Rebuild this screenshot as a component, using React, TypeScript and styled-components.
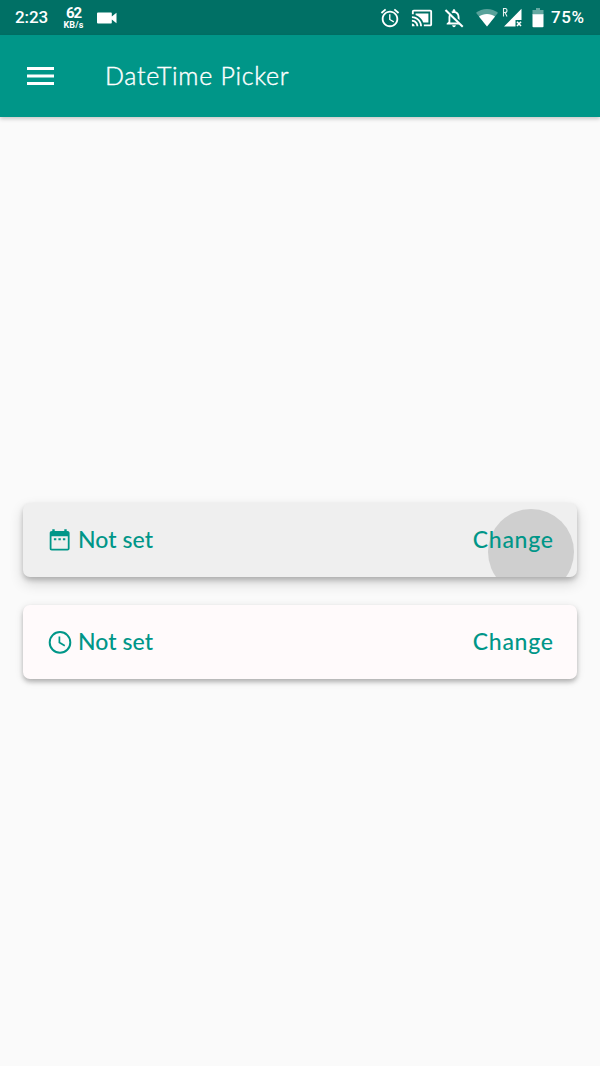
import React from "react";
import styled, { createGlobalStyle } from "styled-components";

const GlobalStyle = createGlobalStyle`
  * { box-sizing: border-box; }
  body { margin: 0; background: #fafafa; }
`;

const Screen = styled.div`
  display: flex;
  flex-direction: column;
  width: 600px;
  height: 1066px;
  overflow: hidden;
  background: #fafafa;
  font-family: Lato, "Open Sans", sans-serif;
`;

const StatusBar = styled.header`
  display: flex;
  align-items: center;
  height: 35px;
  flex: none;
  padding: 0 15px;
  background: #007065;
  color: #fff;
  font-family: Roboto, sans-serif;
  font-weight: 500;
`;

const Clock = styled.span`
  width: 48px;
  font-size: 17px;
  line-height: 35px;
  letter-spacing: -0.1px;
`;

const NetSpeed = styled.div`
  display: flex;
  flex-direction: column;
  align-items: center;
  width: 21px;
  margin-right: 13px;
  padding-top: 1px;
  font-weight: 700;
`;

const SpeedValue = styled.span`
  font-size: 15px;
  line-height: 13px;
  letter-spacing: -1px;
`;

const SpeedUnit = styled.span`
  font-size: 9px;
  line-height: 10px;
  letter-spacing: 0.2px;
  white-space: nowrap;
`;

const Spacer = styled.div`
  flex: 1;
`;

const Glyph = styled.svg<{ $w: number; $h?: number; $gap?: number }>`
  position: relative;
  display: block;
  flex: none;
  width: ${(p) => p.$w}px;
  height: ${(p) => p.$h ?? p.$w}px;
  margin-right: ${(p) => p.$gap ?? 0}px;
  fill: currentColor;
`;

const Battery = styled.span`
  width: 34px;
  font-size: 17px;
  line-height: 35px;
  letter-spacing: 0.6px;
  white-space: nowrap;
`;

const AppBar = styled.nav`
  display: flex;
  align-items: center;
  height: 82px;
  flex: none;
  padding-left: 27px;
  background: #009688;
  color: #fff;
  box-shadow: 0 2px 4px rgba(0, 0, 0, 0.2);
`;

const Title = styled.h1`
  margin: 0 0 3px 51px;
  font-size: 25px;
  line-height: 34px;
  font-weight: 300;
  letter-spacing: 0.7px;
  -webkit-text-stroke: 0.4px currentColor;
`;

const Content = styled.main`
  display: flex;
  flex: 1;
  flex-direction: column;
  justify-content: center;
  gap: 28px;
  padding: 0 23px 2px;
`;

const PickerButton = styled.button<{ $pressed?: boolean }>`
  position: relative;
  display: flex;
  align-items: center;
  height: 74px;
  padding: 0 24px 0 25px;
  border: 0;
  border-radius: 7px;
  overflow: hidden;
  background: ${(p) => (p.$pressed ? "#efefef" : "#fffafb")};
  color: #009688;
  font-family: inherit;
  font-size: 23px;
  font-weight: 500;
  box-shadow: ${(p) =>
    p.$pressed
      ? "0 3px 5px rgba(0,0,0,.2), 0 6px 14px rgba(0,0,0,.16)"
      : "0 3px 4px rgba(0,0,0,.22), 0 2px 8px rgba(0,0,0,.12)"};
`;

const Ripple = styled.span`
  position: absolute;
  left: 465px;
  top: 6px;
  width: 86px;
  height: 86px;
  border-radius: 50%;
  background: #cfcfcf;
`;

const Label = styled.span<{ $spacing: number }>`
  position: relative;
  padding-bottom: 2px;
  line-height: 30px;
  letter-spacing: ${(p) => p.$spacing}px;
  margin-right: ${(p) => -p.$spacing}px;
`;

const CalendarIcon = () => (
  <Glyph $w={24} $gap={6} viewBox="0 0 24 24">
    <path fillRule="evenodd" d="M19.5 3H18.7V1.2H16.3V3H6.7V1.2H4.3V3H4C2.4 3 1.7 3.9 1.7 5V20.5C1.7 21.6 2.4 22.5 3.8 22.5H19.5C20.7 22.5 21.6 21.6 21.6 20.5V5C21.6 3.9 20.7 3 19.5 3ZM19.8 20.7H3.5V8.3H19.8Z" />
    <path d="M5.9 10.3H8.3V12.3H5.9zM10.4 10.3H12.8V12.3H10.4zM14.9 10.3H17.3V12.3H14.9z" />
  </Glyph>
);

const ClockIcon = () => (
  <Glyph $w={24} $gap={6} viewBox="0 0 24 24">
    <circle cx="12" cy="12.4" r="10.3" fill="none" stroke="currentColor" strokeWidth="2" />
    <path d="M11.4 6.4V12.6L16.8 15.7" fill="none" stroke="currentColor" strokeWidth="1.7" />
  </Glyph>
);

export default function App() {
  return (
    <Screen>
      <GlobalStyle />
      <StatusBar>
        <Clock>2:23</Clock>
        <NetSpeed>
          <SpeedValue>62</SpeedValue>
          <SpeedUnit>KB/s</SpeedUnit>
        </NetSpeed>
        <Glyph $w={20} $h={12} viewBox="0 0 20 12">
          <path d="M1 .5H14Q14.8.5 14.8 1.3V4.6L19.5.8V11.2L14.8 7.4V10.7Q14.8 11.5 14 11.5H1Q0 11.5 0 10.5V1.5Q0 .5 1 .5Z" />
        </Glyph>
        <Spacer />
        <Glyph $w={22} $gap={10} viewBox="0 0 24 24">
          <path d="M22 5.72l-4.6-3.86-1.29 1.53 4.6 3.86L22 5.72zM7.88 3.39L6.6 1.86 2 5.71l1.29 1.53 4.59-3.85zM12.5 8H11v6l4.75 2.85.75-1.23-4-2.37V8zM12 4c-4.97 0-9 4.03-9 9s4.02 9 9 9c4.97 0 9-4.03 9-9s-4.03-9-9-9zm0 16c-3.87 0-7-3.13-7-7s3.13-7 7-7 7 3.13 7 7-3.13 7-7 7z" />
        </Glyph>
        <Glyph $w={22} $gap={10} viewBox="0 0 24 24">
          <path d="M1 18v3h3c0-1.66-1.34-3-3-3zm0-4v2c2.76 0 5 2.24 5 5h2c0-3.87-3.13-7-7-7zm18-7H5v1.63c3.96 1.28 7.09 4.41 8.37 8.37H19V7zM1 10v2c4.97 0 9 4.03 9 9h2c0-6.08-4.93-11-11-11zm20-7H3c-1.1 0-2 .9-2 2v3h2V5h18v14h-7v2h7c1.1 0 2-.9 2-2V5c0-1.1-.9-2-2-2z" />
        </Glyph>
        <Glyph $w={22} $gap={11} viewBox="0 0 24 24">
          <path d="M7.1 7.5C6.4 8.5 6 9.7 6 11V16L4 18V19H17.8L15.8 17H8V11C8 10.2 8.2 9.5 8.5 8.9ZM9 5.3C9.5 5 10 4.8 10.5 4.68V4C10.5 3.1 11.1 2.4 12 2.4S13.5 3.1 13.5 4V4.68C16.4 5.4 18 7.9 18 11V14.5L16 12.4V11C16 8.5 14.5 6.5 12 6.5 11.4 6.5 10.9 6.6 10.4 6.8ZM12 22C13.1 22 14 21.1 14 20H10C10 21.1 10.9 22 12 22Z" />
          <path d="M2.7 3.2L21.5 21.5" fill="none" stroke="currentColor" strokeWidth="2.2" />
        </Glyph>
        <Glyph $w={22} $h={18} $gap={4} viewBox="0 0 22 18">
          <path opacity=".35" d="M11 0C6.8 0 3 1.4 0 3.8L11 17.5 22 3.8C19 1.4 15.2 0 11 0Z" />
          <path d="M11 5C7.9 5 5.2 6 3 7.5L11 17.5 19 7.5C16.8 6 14.1 5 11 5Z" />
        </Glyph>
        <Glyph $w={20} $h={20} $gap={10} viewBox="0 0 20 20">
          <path d="M19.5.8V12H13.5V18.5H2Z" />
          <path d="M15 13.8L19 18M19 13.8L15 18" fill="none" stroke="currentColor" strokeWidth="1.6" />
          <path d="M1.5 8.5V.5H3Q5 .5 5 2.5T3 4.5H1.5M3 4.5L5 8.5" fill="none" stroke="currentColor" strokeWidth="1.1" opacity=".9" />
        </Glyph>
        <Glyph $w={12} $h={20} $gap={7} viewBox="0 0 12 20">
          <path opacity=".4" d="M4 0H8V2H11.5V7H.5V2H4Z" />
          <path d="M.5 6.3H11.5V18.4Q11.5 19.2 10.5 19.2H1.5Q.5 19.2.5 18.4Z" />
        </Glyph>
        <Battery>75%</Battery>
      </StatusBar>
      <AppBar>
        <Glyph $w={27} $h={18} viewBox="0 0 27 18">
          <path d="M0 0H27V3H0zM0 7.5H27V10.5H0zM0 15H27V18H0z" />
        </Glyph>
        <Title>DateTime Picker</Title>
      </AppBar>
      <Content>
        <PickerButton $pressed>
          <Ripple />
          <CalendarIcon />
          <Label $spacing={0.05}>Not set</Label>
          <Spacer />
          <Label $spacing={0.75}>Change</Label>
        </PickerButton>
        <PickerButton>
          <ClockIcon />
          <Label $spacing={0.05}>Not set</Label>
          <Spacer />
          <Label $spacing={0.75}>Change</Label>
        </PickerButton>
      </Content>
    </Screen>
  );
}
